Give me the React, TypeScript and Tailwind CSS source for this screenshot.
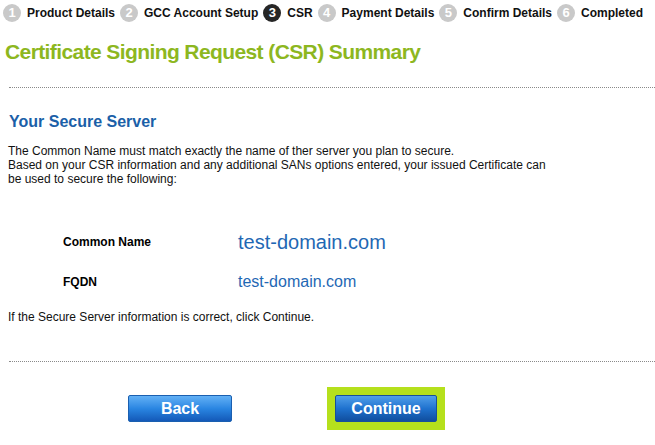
import React from "react";

const steps = [
  { n: 1, label: "Product Details" },
  { n: 2, label: "GCC Account Setup" },
  { n: 3, label: "CSR", active: true },
  { n: 4, label: "Payment Details" },
  { n: 5, label: "Confirm Details" },
  { n: 6, label: "Completed" },
];

function Dots() {
  return <div className="ml-[9px] border-t border-dotted border-[#8a8a8a]" />;
}

export default function App() {
  return (
    <div className="w-[655px] h-[445px] bg-white overflow-hidden text-black" style={{ fontFamily: '"Liberation Sans", Arial, sans-serif' }}>
      {/* step bar */}
      <div className="flex items-center h-[25px] pl-[3px] pt-[1px]">
        {steps.map((s) => (
          <div key={s.n} className="flex items-center mr-[5px]">
            <span
              className={
                s.active
                  ? "w-[18px] h-[18px] rounded-full bg-[#262626] text-white text-[13px] font-bold flex items-center justify-center"
                  : "w-[18px] h-[18px] rounded-full bg-[#c9c9c9] text-white text-[13px] font-bold flex items-center justify-center"
              }
            >
              {s.n}
            </span>
            <span className="ml-[6px] text-[12px] font-bold text-[#111]">{s.label}</span>
          </div>
        ))}
      </div>

      <h1 className="mt-[15px] ml-[5px] text-[21px] leading-[24px] font-bold text-[#8db71f] tracking-[-0.6px]">
        Certificate Signing Request (CSR) Summary
      </h1>

      <div className="mt-[23px]">
        <Dots />
      </div>

      <h2 className="mt-[24px] ml-[9px] text-[16px] leading-[20px] font-bold text-[#1b5fa8]">Your Secure Server</h2>

      <div className="mt-[12px] ml-[8px] text-[12px] leading-[14px] text-[#111] w-[540px]">
        <p>The Common Name must match exactly the name of ther server you plan to secure.</p>
        <p>Based on your CSR information and any additional SANs options entered, your issued Certificate can be used to secure the following:</p>
      </div>

      <div className="mt-[44px] grid grid-cols-[175px_1fr] ml-[63px] items-center">
        <div className="text-[12px] font-bold">Common Name</div>
        <div className="text-[20px] leading-[24px] text-[#1f68b4]">test-domain.com</div>
        <div className="text-[12px] font-bold mt-[18px]">FQDN</div>
        <div className="text-[16px] leading-[20px] text-[#1f68b4] mt-[18px]">test-domain.com</div>
      </div>

      <p className="mt-[18px] ml-[8px] text-[12px] leading-[14px] text-[#111]">
        If the Secure Server information is correct, click Continue.
      </p>

      <div className="mt-[37px]">
        <Dots />
      </div>

      <div className="flex items-center mt-[25px] ml-[128px]">
        <button className="w-[104px] h-[27px] rounded-[2px] border border-[#1a5fb0] bg-gradient-to-b from-[#61b0f5] via-[#2a86e2] to-[#1459b8] text-white text-[16px] font-bold">
          Back
        </button>
        <div className="ml-[95px] p-[8px] bg-[#b5e01c]">
          <button className="w-[102px] h-[27px] rounded-[2px] border border-[#174f9a] bg-gradient-to-b from-[#4f9fe9] via-[#1f72cf] to-[#104e9e] text-white text-[16px] font-bold">
            Continue
          </button>
        </div>
      </div>
    </div>
  );
}
